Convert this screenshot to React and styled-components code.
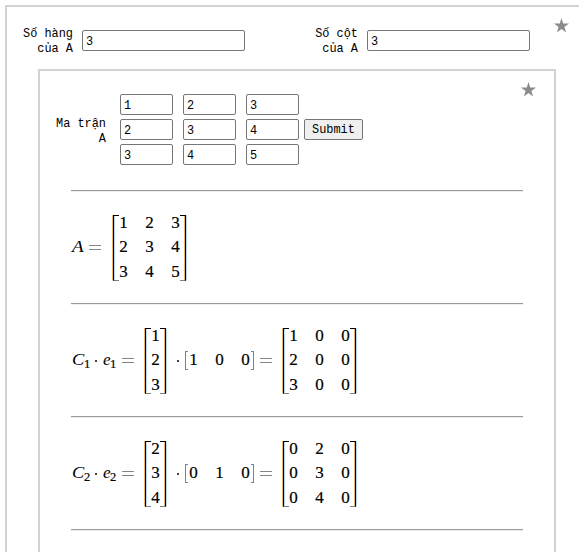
import React from "react";
import styled, { createGlobalStyle } from "styled-components";

const Global = createGlobalStyle`
  * { box-sizing: border-box; }
  html, body { margin: 0; background: #fff; overflow: hidden; }
`;

const mono = `"Liberation Mono", "DejaVu Sans Mono", monospace`;

const Viewport = styled.div`
  width: 579px;
  height: 552px;
  overflow: hidden;
  padding: 5px 0 0 5px;
  color: #000;
  font: 11.9px/15px ${mono};
`;

const Panel = styled.section`
  position: relative;
  width: ${(p) => p.$width}px;
  border: 2px solid #d3d3d3;
`;

const OuterPanel = styled(Panel)`
  height: 700px;
  padding: 19px 31px 0;
`;

const InnerPanel = styled(Panel)`
  height: 600px;
  padding: 23px 31px 0;
  margin-top: 13px;
`;

const Star = styled.svg`
  position: absolute;
  top: ${(p) => p.$top}px;
  right: ${(p) => p.$right}px;
  width: 15px;
  height: 15px;
  fill: #8b8b8b;
`;

const SizeRow = styled.div`
  display: flex;
  height: 30px;
  margin-left: -23px;
`;

const Label = styled.label`
  width: ${(p) => p.$width}px;
  padding-top: ${(p) => p.$drop || 0}px;
  text-align: right;
  white-space: pre-line;
`;

const Input = styled.input`
  width: ${(p) => p.$width}px;
  height: 21px;
  border: 1px solid #767676;
  border-radius: 2px;
  padding: 3px 3px 1px;
  background: #fff;
  color: #000;
  font: 11.9px/15px ${mono};
  outline: none;
`;

const SizeInput = styled(Input)`
  margin: 4px ${(p) => p.$gap || 0}px 0 9px;
`;

const MatrixForm = styled.form`
  display: flex;
  align-items: center;
  height: 71px;
  margin-left: -21px;
`;

const InputGrid = styled.div`
  display: grid;
  grid-template-columns: repeat(3, 53px);
  gap: 4px 10px;
  margin: 0 5px 0 14px;
`;

const Submit = styled.button`
  width: 59px;
  height: 21px;
  padding: 2px 0 0;
  border: 1px solid #767676;
  border-radius: 2px;
  background: #efefef;
  color: #000;
  font: 11.9px/15px ${mono};
`;

const Results = styled.div`
  margin-top: 25px;
`;

const Rule = styled.hr`
  width: 452px;
  height: 2px;
  margin: 0;
  border: 0;
  border-top: 1px solid #9a9a9a;
  border-bottom: 1px solid #eee;
`;

const Equation = styled.div`
  display: flex;
  align-items: center;
  height: 111px;
  font: 17px/24px "Liberation Serif", serif;
  -webkit-text-stroke: 0.2px #000;
`;

const Var = styled.i`
  display: inline-block;
  width: ${(p) => p.$width}px;
  -webkit-text-stroke: 0;
  transform: translate(1px, -1px) scaleX(${(p) => p.$stretch || 1});
  transform-origin: left;
`;

const Sub = styled.span`
  width: 7px;
  font-size: 12.5px;
  transform: translateY(3px);
`;

const Dot = styled.span`
  width: 2px;
  height: 2px;
  border-radius: 1px;
  background: #000;
  margin: 0 ${(p) => p.$after}px 0 ${(p) => p.$before}px;
`;

const Equals = styled.span`
  width: 12px;
  height: 5px;
  border: solid #868686;
  border-width: 1px 0;
  margin: 0 ${(p) => p.$after || 0}px 1px ${(p) => p.$before || 0}px;
`;

const Bracket = styled.div`
  display: flex;
  position: relative;
  height: ${(p) => (p.$small ? 17 : 66)}px;
  padding: 0 ${(p) => (p.$small ? 4 : 7)}px;
  align-items: center;
`;

const Edge = styled.span`
  position: absolute;
  top: 0;
  bottom: 0;
  ${(p) => p.$side}: 1px;
  width: 6px;
  border: 1px solid #000;
  border-${(p) => (p.$side === "left" ? "right" : "left")}: 0;
  box-shadow: -1px 0 #eeb565, inset 1px 0 #b5dcff;
  clip-path: inset(0 0 0 -1px);
  ${(p) =>
    p.$side === "right" &&
    `
    box-shadow: 1px 0 #b5dcff, inset -1px 0 #eeb565;
    clip-path: inset(0 -1px 0 0);
  `}
`;

const SmallEdge = styled.span`
  position: absolute;
  top: -1px;
  bottom: -1px;
  ${(p) => p.$side}: 0;
  width: 3px;
  border: 1px solid ${(p) => (p.$side === "left" ? "#7a7cab" : "#4f8fc4")};
  border-${(p) => (p.$side === "left" ? "right" : "left")}: 0;
`;

const Cells = styled.div`
  display: grid;
  grid-template-columns: repeat(${(p) => p.$cols}, 9px);
  column-gap: 17px;
  grid-auto-rows: 24.5px;
  text-align: center;
`;

function StarIcon({ top, right }) {
  return (
    <Star viewBox="0 0 15 15" $top={top} $right={right}>
      <path d="M7.5 0 9.2 5.5H15L10.4 8.9 12.1 14.5 7.5 11.1 2.9 14.5 4.6 8.9 0 5.5H5.8Z" />
    </Star>
  );
}

function Matrix({ rows }) {
  const small = rows.length === 1;
  const Side = small ? SmallEdge : Edge;
  return (
    <Bracket $small={small}>
      <Side $side="left" />
      <Cells $cols={rows[0].length}>
        {rows.flat().map((n, i) => (
          <span key={i}>{n}</span>
        ))}
      </Cells>
      <Side $side="right" />
    </Bracket>
  );
}

function Product({ index, column, unit, result }) {
  return (
    <Equation>
      <Var $width={13} $stretch={1.08}>C</Var>
      <Sub>{index}</Sub>
      <Dot $before={4} $after={5} />
      <Var $width={8}>e</Var>
      <Sub>{index}</Sub>
      <Equals $before={5} $after={10} />
      <Matrix rows={column} />
      <Dot $before={10} $after={6} />
      <Matrix rows={unit} />
      <Equals $before={6} $after={10} />
      <Matrix rows={result} />
    </Equation>
  );
}

const A = [[1, 2, 3], [2, 3, 4], [3, 4, 5]];

export default function App() {
  return (
    <Viewport>
      <Global />
      <OuterPanel $width={584}>
        <StarIcon top={11} right={18} />
        <SizeRow>
          <Label $width={58} $drop={1}>{"Số hàng\ncủa A"}</Label>
          <SizeInput $width={163} $gap={58} defaultValue="3" />
          <Label $width={55} $drop={1}>{"Số cột\ncủa A"}</Label>
          <SizeInput $width={163} defaultValue="3" />
        </SizeRow>
        <InnerPanel $width={518}>
          <StarIcon top={11} right={18} />
          <MatrixForm onSubmit={(e) => e.preventDefault()}>
            <Label $width={56} $drop={4}>{"Ma trận\nA"}</Label>
            <InputGrid>
              {A.flat().map((n, i) => (
                <Input key={i} $width={53} defaultValue={n} />
              ))}
            </InputGrid>
            <Submit>Submit</Submit>
          </MatrixForm>
          <Results>
            <Rule />
            <Equation>
              <Var $width={18} $stretch={1.12}>A</Var>
              <Equals $after={11} />
              <Matrix rows={A} />
            </Equation>
            <Rule />
            <Product
              index={1}
              column={[[1], [2], [3]]}
              unit={[[1, 0, 0]]}
              result={[[1, 0, 0], [2, 0, 0], [3, 0, 0]]}
            />
            <Rule />
            <Product
              index={2}
              column={[[2], [3], [4]]}
              unit={[[0, 1, 0]]}
              result={[[0, 2, 0], [0, 3, 0], [0, 4, 0]]}
            />
            <Rule />
          </Results>
        </InnerPanel>
      </OuterPanel>
    </Viewport>
  );
}
